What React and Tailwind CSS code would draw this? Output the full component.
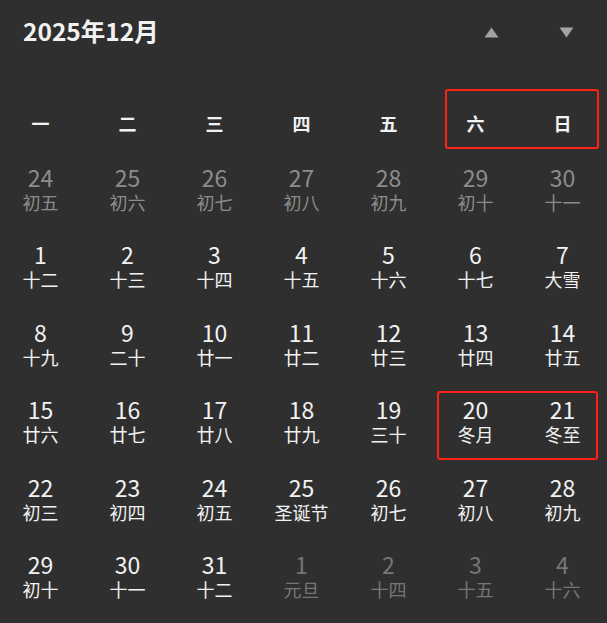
import React from "react";

const weekdays = ["一", "二", "三", "四", "五", "六", "日"];

const days = [
  ["24", "初五", "p"], ["25", "初六", "p"], ["26", "初七", "p"], ["27", "初八", "p"], ["28", "初九", "p"], ["29", "初十", "p"], ["30", "十一", "p"],
  ["1", "十二", "c"], ["2", "十三", "c"], ["3", "十四", "c"], ["4", "十五", "c"], ["5", "十六", "c"], ["6", "十七", "c"], ["7", "大雪", "c"],
  ["8", "十九", "c"], ["9", "二十", "c"], ["10", "廿一", "c"], ["11", "廿二", "c"], ["12", "廿三", "c"], ["13", "廿四", "c"], ["14", "廿五", "c"],
  ["15", "廿六", "c"], ["16", "廿七", "c"], ["17", "廿八", "c"], ["18", "廿九", "c"], ["19", "三十", "c"], ["20", "冬月", "c"], ["21", "冬至", "c"],
  ["22", "初三", "c"], ["23", "初四", "c"], ["24", "初五", "c"], ["25", "圣诞节", "c"], ["26", "初七", "c"], ["27", "初八", "c"], ["28", "初九", "c"],
  ["29", "初十", "c"], ["30", "十一", "c"], ["31", "十二", "c"], ["1", "元旦", "n"], ["2", "十四", "n"], ["3", "十五", "n"], ["4", "十六", "n"],
];

export default function App() {
  return (
    <div
      className="relative w-[607px] h-[623px] overflow-hidden bg-[#2f2f2f] text-[#f2f2f2]"
      style={{ fontFamily: '"Noto Sans CJK SC", "Noto Sans", sans-serif' }}
    >
      <div className="flex items-center h-[62px] pl-[23px] pr-[33px]">
        <div className="text-[24.5px] font-semibold leading-none">2025年12月</div>
        <div className="ml-auto flex items-center gap-[60px] pt-[2px]">
          <svg width="15" height="11" viewBox="0 0 15 11">
            <polygon points="7.5,0.5 14.5,10.5 0.5,10.5" fill="#a3a3a3" />
          </svg>
          <svg width="15" height="11" viewBox="0 0 15 11">
            <polygon points="0.5,0.5 14.5,0.5 7.5,10.5" fill="#a3a3a3" />
          </svg>
        </div>
      </div>

      <div className="ml-[-3px] w-[609px] grid grid-cols-7 mt-[32px] h-[58px] items-center">
        {weekdays.map((w) => (
          <div key={w} className="text-center text-[18px] font-bold leading-none">
            {w}
          </div>
        ))}
      </div>

      <div className="ml-[-3px] w-[609px] grid grid-cols-7 auto-rows-[77.5px] mt-[-2px]">
        {days.map(([d, l, t], i) => {
          const color =
            t === "p" ? "text-[#8c8c8c]" : t === "n" ? "text-[#767676]" : "text-[#f2f2f2]";
          return (
            <div key={i} className={`flex flex-col items-center justify-center ${color}`}>
              <div className="text-[23px] leading-[26px]">{d}</div>
              <div className="text-[18px] leading-[24px]">{l}</div>
            </div>
          );
        })}
      </div>

      <div className="absolute left-[445px] top-[89px] w-[154px] h-[60px] border-2 border-[#ff2116] rounded-[3px]" />
      <div className="absolute left-[437px] top-[391px] w-[161px] h-[69px] border-2 border-[#ff2116] rounded-[3px]" />
    </div>
  );
}
